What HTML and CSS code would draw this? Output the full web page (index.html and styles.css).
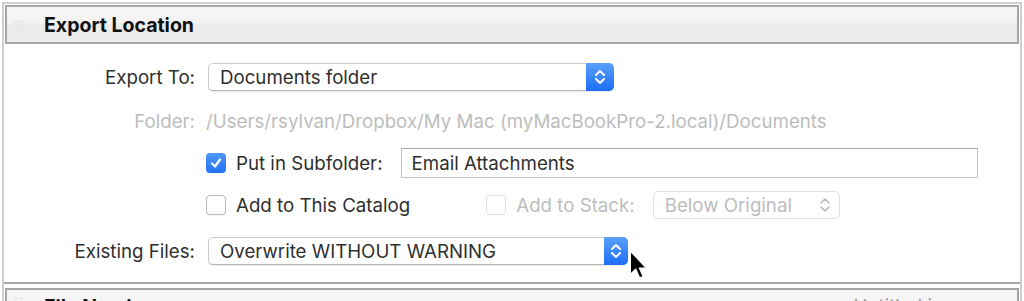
FILE: index.html
```html
<!DOCTYPE html>
<html lang="en">
<head>
  <meta charset="UTF-8" />
  <title>Export Location</title>
  <link rel="stylesheet" href="styles.css">
</head>
<body>
  <div class="panel">
    <div class="section-head">
      <span class="disclosure">▽</span>
      <span class="section-title">Export Location</span>
    </div>

    <div class="section-body">
      <div class="row row-export">
        <div class="label">Export To:</div>
        <div class="field">
          <div class="popup popup-export">
            <span class="popup-text">Documents folder</span>
            <span class="stepper">
              <svg width="12" height="18" viewBox="0 0 12 18"><path d="M2 7 L6 3 L10 7 M2 11 L6 15 L10 11" fill="none" stroke="#fff" stroke-width="2" stroke-linecap="round" stroke-linejoin="round"/></svg>
            </span>
          </div>
        </div>
      </div>

      <div class="row row-folder">
        <div class="label dim">Folder:</div>
        <div class="field dim">/Users/rsylvan/Dropbox/My Mac (myMacBookPro-2.local)/Documents</div>
      </div>

      <div class="row row-sub">
        <div class="label"></div>
        <div class="field">
          <span class="check checked">
            <svg width="14" height="14" viewBox="0 0 14 14"><path d="M3 7.5 L6 10.5 L11 3.5" fill="none" stroke="#fff" stroke-width="2.2" stroke-linecap="round" stroke-linejoin="round"/></svg>
          </span>
          <span class="check-label">Put in Subfolder:</span>
          <div class="textbox">Email Attachments</div>
        </div>
      </div>

      <div class="row row-catalog">
        <div class="label"></div>
        <div class="field">
          <span class="check"></span>
          <span class="check-label">Add to This Catalog</span>
          <span class="check disabled stack-check"></span>
          <span class="check-label dim">Add to Stack:</span>
          <div class="popup popup-stack">
            <span class="popup-text dim">Below Original</span>
            <span class="stepper-plain">
              <svg width="12" height="18" viewBox="0 0 12 18"><path d="M2 7 L6 3 L10 7 M2 11 L6 15 L10 11" fill="none" stroke="#b8b8b8" stroke-width="1.6" stroke-linecap="round" stroke-linejoin="round"/></svg>
            </span>
          </div>
        </div>
      </div>

      <div class="row row-existing">
        <div class="label">Existing Files:</div>
        <div class="field">
          <div class="popup popup-existing">
            <span class="popup-text">Overwrite WITHOUT WARNING</span>
            <span class="stepper">
              <svg width="12" height="18" viewBox="0 0 12 18"><path d="M2 7 L6 3 L10 7 M2 11 L6 15 L10 11" fill="none" stroke="#fff" stroke-width="2" stroke-linecap="round" stroke-linejoin="round"/></svg>
            </span>
            <svg class="cursor" width="22" height="34" viewBox="0 0 20 30"><path d="M2 1 L2 23 L7 18 L10.5 26 L14 24.5 L10.5 17 L17 17 Z" fill="#000" stroke="#fff" stroke-width="1.4" stroke-linejoin="round"/></svg>
          </div>
        </div>
      </div>
    </div>

    <div class="section-head next">
      <span class="disclosure">▽</span>
      <span class="section-title">File Naming</span>
      <span class="head-right">Untitled.jpg</span>
    </div>
  </div>
</body>
</html>
```

FILE: styles.css
```css
body {
  margin: 0;
  height: 301px;
  background: #fff;
  font-family: Inter, "Liberation Sans", sans-serif;
  font-size: 18.7px;
  color: #2f2f2f;
  overflow: hidden;
}

.panel {
  margin: 2px 2px 0 2px;
  border-top: 2px solid #cfcfcf;
  border-left: 2px solid #cfcfcf;
  border-right: 2px solid #cfcfcf;
  height: 297px;
  overflow: hidden;
}

.section-head {
  margin: 1px 1px 0 1px;
  height: 35px;
  border: 2px solid #a6a6a6;
  background: linear-gradient(#f7f7f7, #f3f3f3 45%, #ebebeb 50%, #ececec);
  display: flex;
  align-items: center;
}

.disclosure {
  width: 31px;
  padding-left: 6px;
  color: #e6e6e6;
  font-size: 11px;
}

.section-title {
  font-weight: 700;
  font-size: 19.5px;
  color: #111;
}

.section-head.next {
  margin-top: 4px;
  align-items: flex-start;
  padding-top: 5px;
}

.head-right {
  margin-left: auto;
  margin-right: 62px;
  color: #999;
}

.section-body {
  padding: 19px 0 17px 0;
  border-bottom: 2px solid #a6a6a6;
  margin-left: -2px;
}

.row {
  display: flex;
  align-items: center;
}

.label {
  width: 193px;
  text-align: right;
  padding-right: 11px;
  flex-shrink: 0;
}

.field {
  display: flex;
  align-items: center;
}

.dim {
  color: #bdbdbd;
}

.row-export { height: 28px; }
.row-folder { height: 20px; margin-top: 20px; }
.row-sub { height: 30px; margin-top: 17px; }
.row-catalog { height: 28px; margin-top: 13px; }
.row-existing { height: 28px; margin-top: 18px; }

.popup {
  position: relative;
  height: 26px;
  border: 1px solid #c9c9c9;
  border-bottom-color: #b4b4b4;
  border-radius: 5px;
  background: #fff;
  box-shadow: 0 1px 1px rgba(0, 0, 0, 0.08);
  display: flex;
  align-items: center;
  margin-left: 2px;
}

.popup-text {
  padding-left: 11px;
  flex: 1;
}

.popup-export { width: 404px; }
.popup-existing { width: 418px; }

.stepper {
  width: 28px;
  height: 28px;
  margin: -1px -1px -1px 0;
  border-radius: 0 5px 5px 0;
  background: linear-gradient(#5ba0fb, #1c6ff6);
  display: flex;
  align-items: center;
  justify-content: center;
}

.popup-existing .stepper { width: 24px; }

.stepper-plain {
  width: 28px;
  display: flex;
  align-items: center;
  justify-content: center;
}

.popup-stack {
  width: 185px;
  border-color: #e0e0e0;
  margin-left: 18px;
  box-shadow: none;
}

.check {
  width: 18px;
  height: 18px;
  border: 1px solid #b9b9b9;
  border-radius: 4px;
  background: #fff;
  display: flex;
  align-items: center;
  justify-content: center;
  flex-shrink: 0;
  box-shadow: 0 1px 1px rgba(0, 0, 0, 0.06);
}

.check.checked {
  width: 20px;
  height: 20px;
  border: none;
  background: linear-gradient(#4f97fa, #2272f5);
}

.check.disabled {
  border-color: #dedede;
  box-shadow: none;
}

.stack-check {
  margin-left: 76px;
}

.check-label {
  margin-left: 10px;
}

.textbox {
  margin-left: 18px;
  width: 565px;
  height: 28px;
  border: 1px solid #c4c4c4;
  border-top-color: #a9a9a9;
  padding-left: 10px;
  display: flex;
  align-items: center;
}

.cursor {
  position: absolute;
  right: -23px;
  top: 11px;
}
```
